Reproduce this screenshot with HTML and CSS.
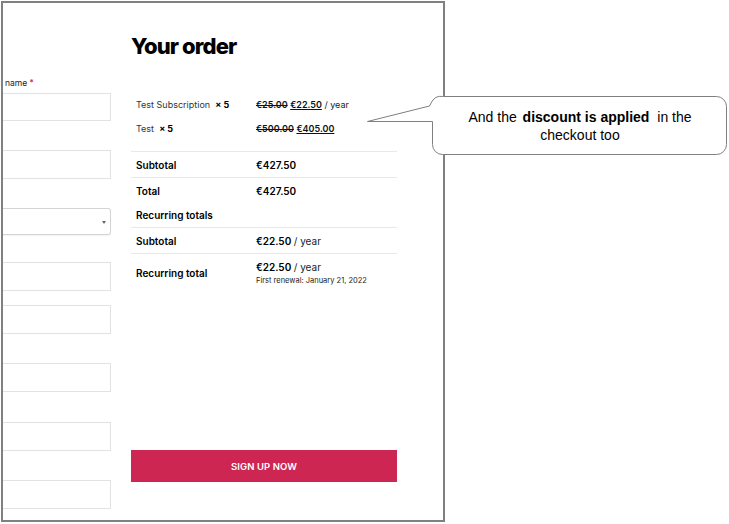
FILE: index.html
```html
<!DOCTYPE html>
<html>
<head>
<meta charset="utf-8">
<link rel="stylesheet" href="styles.css">
</head>
<body>
<div class="frame">
  <div class="form">
    <div class="label">name <span class="req">*</span></div>
    <div class="field f1"></div>
    <div class="field gap-lg"></div>
    <div class="field select gap-lg"><span class="arrow"></span></div>
    <div class="field gap-md"></div>
    <div class="field gap-sm"></div>
    <div class="field gap-lg"></div>
    <div class="field gap-xl"></div>
    <div class="field gap-lg"></div>
  </div>
  <div class="order">
    <h2 class="title">Your order</h2>
    <div class="items">
      <div class="row item">
        <div class="name">Test Subscription&nbsp; <b>× 5</b></div>
        <div class="val"><del>€25.00</del> <ins>€22.50</ins> <span class="per">/ year</span></div>
      </div>
      <div class="row item">
        <div class="name">Test&nbsp; <b>× 5</b></div>
        <div class="val"><del>€500.00</del> <ins>€405.00</ins></div>
      </div>
    </div>
    <div class="row tot line">
      <div class="lab">Subtotal</div>
      <div class="amt">€427.50</div>
    </div>
    <div class="row tot line">
      <div class="lab">Total</div>
      <div class="amt">€427.50</div>
    </div>
    <div class="row tot head">
      <div class="lab">Recurring totals</div>
    </div>
    <div class="row tot line">
      <div class="lab">Subtotal</div>
      <div class="amt">€22.50 <span class="per">/ year</span></div>
    </div>
    <div class="row rec line">
      <div class="lab">Recurring total</div>
      <div class="amt-wrap">
        <div class="amt">€22.50 <span class="per">/ year</span></div>
        <div class="renew">First renewal: January 21, 2022</div>
      </div>
    </div>
    <button class="btn">SIGN UP NOW</button>
  </div>
</div>
<div class="callout">
  <svg class="bubble" width="369" height="70" viewBox="0 0 369 70">
    <path d="M82.5 6.5 H356.5 A10 10 0 0 1 366.5 16.5 V54.5 A10 10 0 0 1 356.5 64.5 H82.5 A10 10 0 0 1 72.5 54.5 V31.5 H7.5 L69.5 16 Q72 11 73 10 A10 10 0 0 1 82.5 6.5 Z" fill="#fff" stroke="#7f7f7f" stroke-width="1"/>
  </svg>
  <div class="ctext"><p class="ctext-inner">And the <b class="em">discount is applied</b> in the checkout too</p></div>
</div>
</body>
</html>
```

FILE: styles.css
```css
html, body {
  margin: 0;
  padding: 0;
  background: #fff;
}
body {
  width: 729px;
  height: 524px;
  position: relative;
  font-family: Inter, "Noto Sans", sans-serif;
  color: #000;
}
.frame {
  margin: 1px 0 0 1px;
  width: 440px;
  height: 517px;
  border: 2px solid #808080;
  display: flex;
  overflow: hidden;
  box-sizing: content-box;
}
.form {
  width: 108px;
  padding-top: 74px;
  display: flex;
  flex-direction: column;
}
.label {
  font-size: 8.5px;
  line-height: 12px;
  height: 12px;
  padding-left: 2px;
  color: #222;
}
.req { color: #cd2653; }
.field {
  height: 29px;
  box-sizing: border-box;
  border: 1px solid #e2e2e2;
  border-left: none;
  background: #fff;
}
.f1 { margin-top: 4px; height: 28px; }
.gap-lg { margin-top: 29px; }
.gap-xl { margin-top: 30px; }
.gap-md { margin-top: 27px; }
.gap-sm { margin-top: 14px; }
.select {
  height: 27px;
  border-color: #d4d4d4;
  border-radius: 0 3px 3px 0;
  position: relative;
  box-shadow: 0 1px 1px rgba(0,0,0,0.05);
}
.arrow {
  position: absolute;
  right: 4px;
  top: 12px;
  width: 0;
  height: 0;
  border-left: 2px solid transparent;
  border-right: 2px solid transparent;
  border-top: 3px solid #666;
}
.order {
  width: 266px;
  margin-left: 20px;
  display: flex;
  flex-direction: column;
}
.title {
  margin: 32px 0 0 0;
  font-size: 22px;
  line-height: 22px;
  height: 22px;
  font-weight: 800;
  letter-spacing: -0.04em;
}
.items {
  margin-top: 35px;
  padding-bottom: 11px;
}
.row {
  display: grid;
  grid-template-columns: 120px 1fr;
  padding: 0 5px;
  align-items: center;
}
.item {
  height: 24px;
  font-size: 9px;
  color: #333;
}
.item b { color: #000; font-weight: 700; }
.val { color: #000; }
.val del, .val ins { font-weight: 600; color: #111; }
.val ins { text-decoration: underline; }
.per { font-weight: 400; color: #222; }
.line { border-top: 1px solid #e8e8e8; }
.tot {
  height: 25px;
  font-size: 10px;
}
.head { height: 24px; }
.lab { font-weight: 600; }
.amt { font-weight: 600; font-size: 10px; }
.rec {
  height: 38px;
  font-size: 10px;
}
.rec .amt { line-height: 14px; }
.renew {
  font-size: 7.5px;
  line-height: 12px;
  margin-top: 1px;
  color: #222;
}
.btn {
  margin-top: 158px;
  height: 32px;
  border: none;
  background: #cd2653;
  color: #fff;
  font-family: Inter, "Noto Sans", sans-serif;
  font-weight: 600;
  font-size: 9.5px;
  letter-spacing: 0.01em;
  padding: 0;
}
.callout {
  position: absolute;
  left: 360px;
  top: 90px;
  width: 369px;
  height: 70px;
}
.bubble {
  position: absolute;
  left: 0;
  top: 0;
}
.ctext {
  position: absolute;
  left: 82px;
  top: 7px;
  width: 276px;
  height: 58px;
  display: flex;
  align-items: center;
  justify-content: center;
}
.ctext-inner {
  margin: 0;
  text-align: center;
  font-family: "Liberation Sans", Arial, sans-serif;
  font-size: 14px;
  line-height: 18px;
  color: #000;
}
.em {
  padding: 0 4px 0 2px;
}
```
